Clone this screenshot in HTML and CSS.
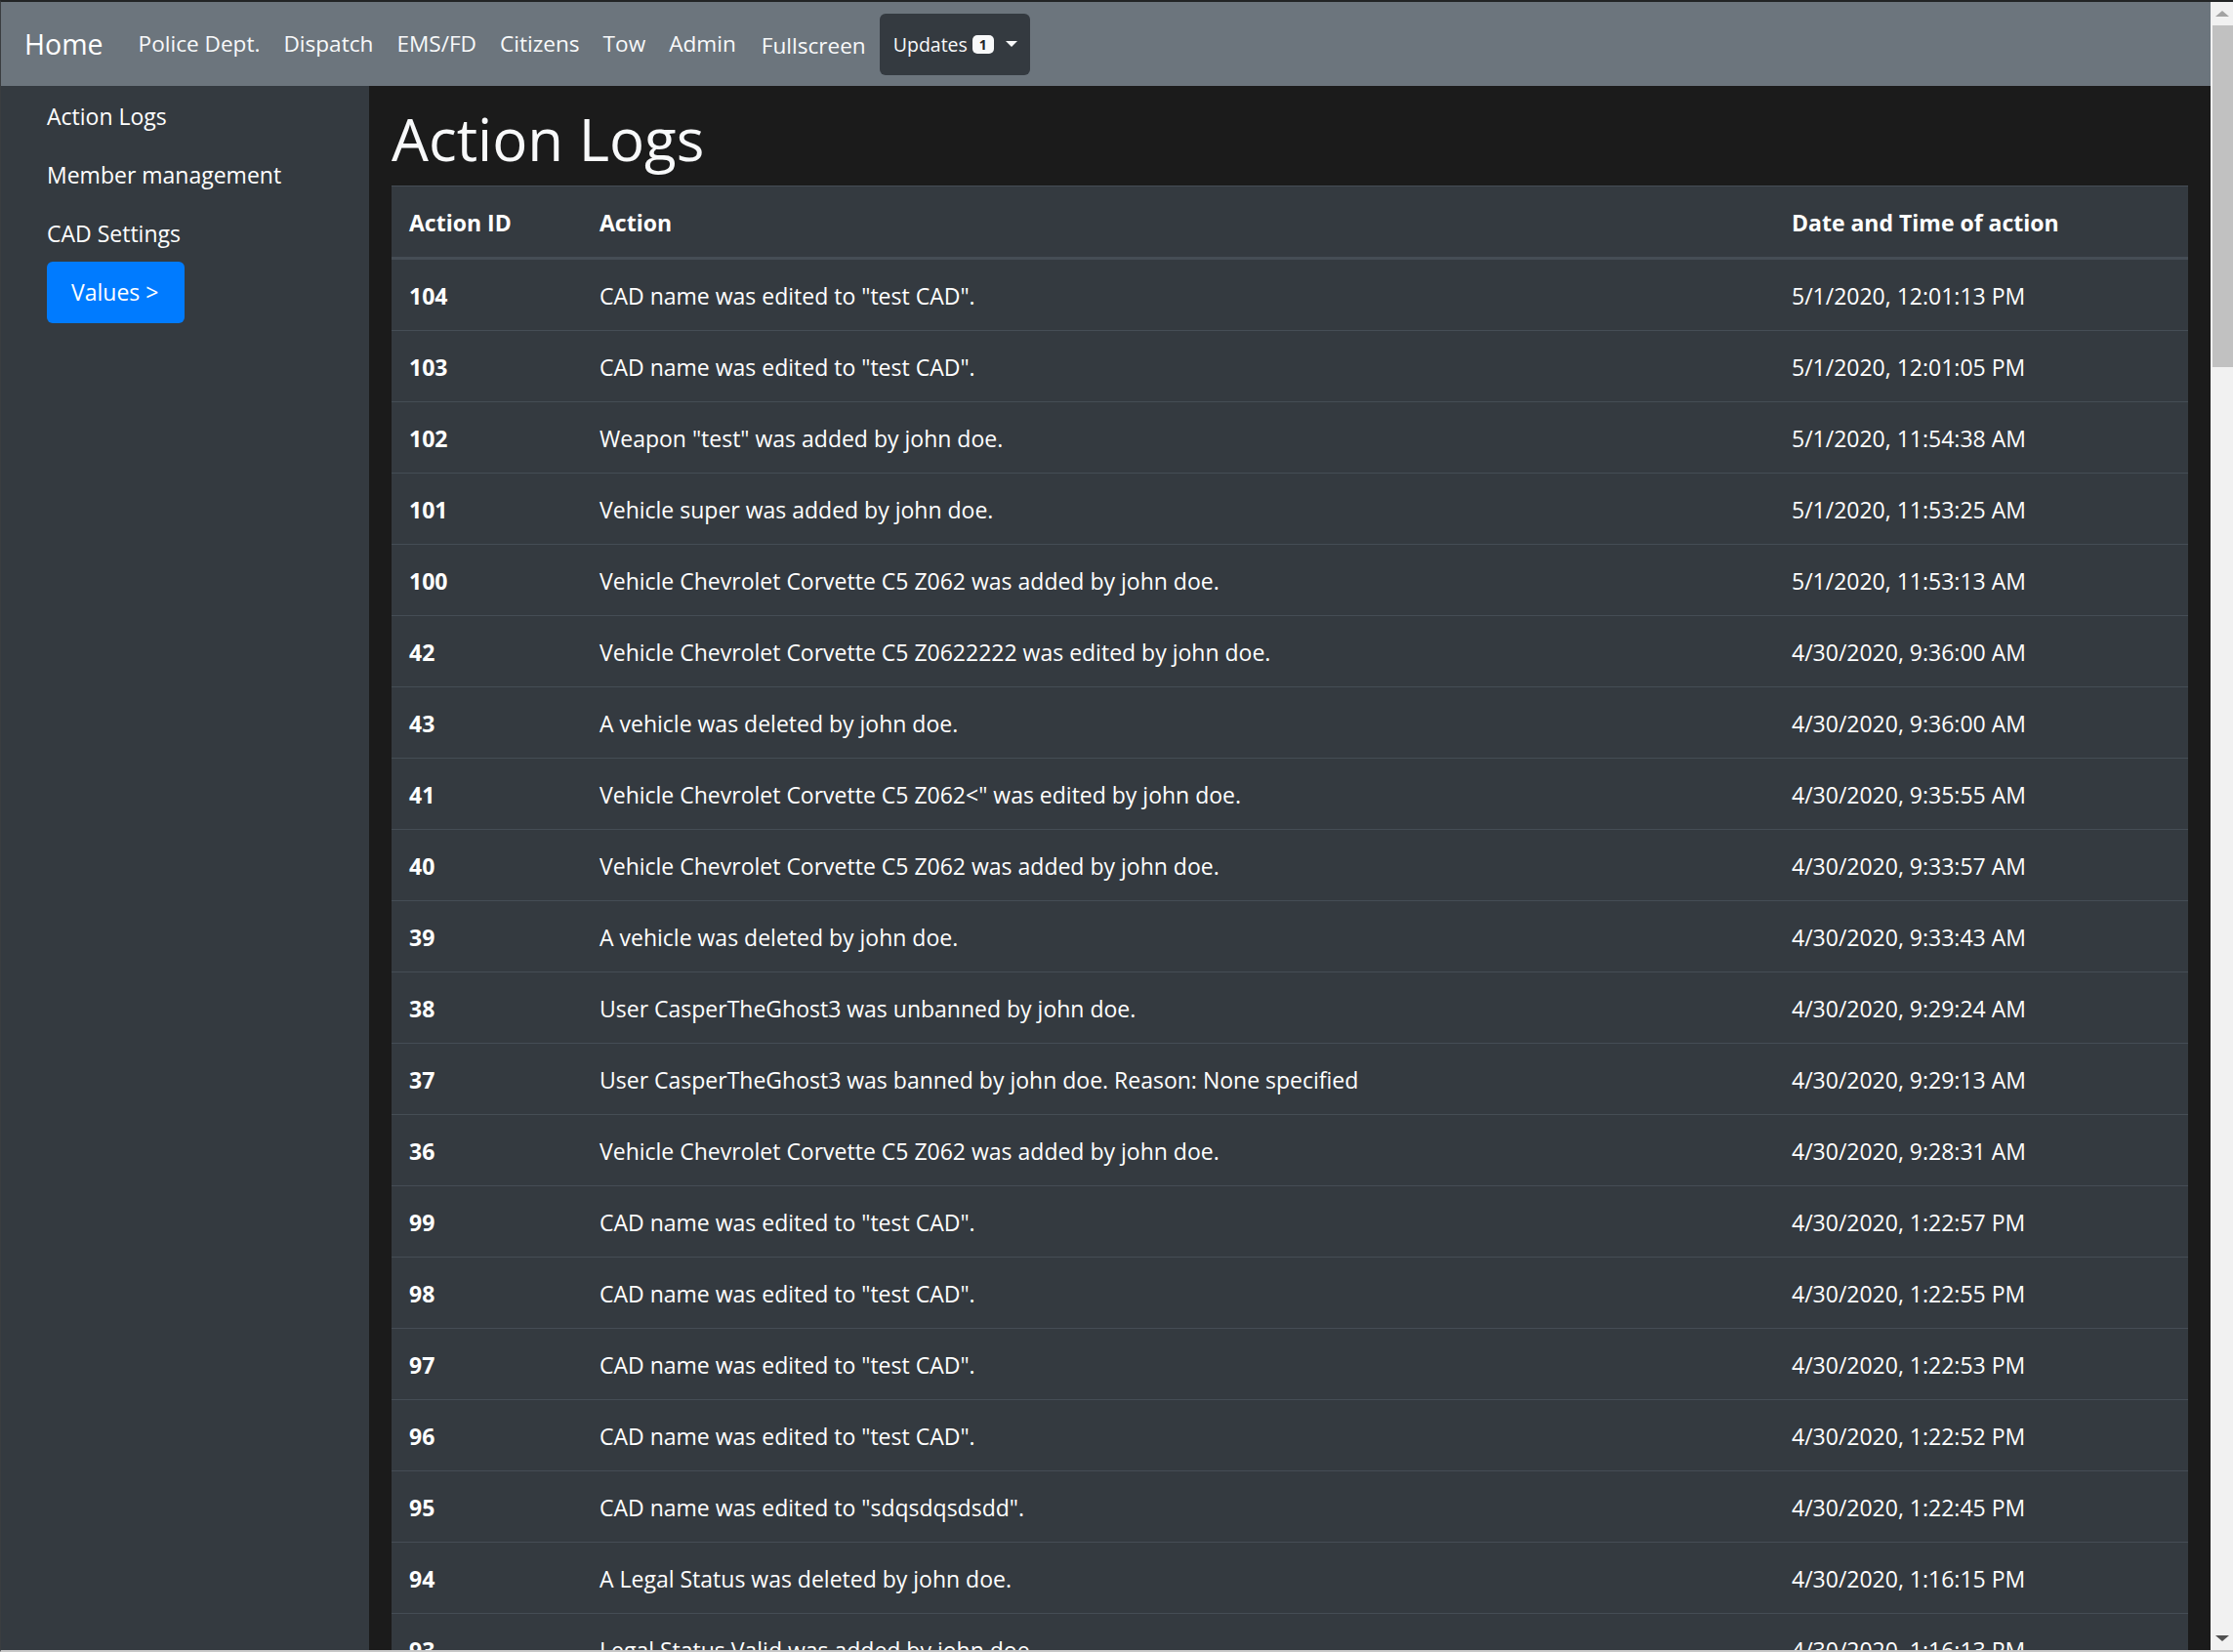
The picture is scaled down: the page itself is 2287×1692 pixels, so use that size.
FILE: index.html
```html
<!DOCTYPE html>
<html lang="en">
<head>
<meta charset="utf-8">
<title>Action Logs</title>
<link rel="stylesheet" href="styles.css">
</head>
<body>
<div class="app">
  <nav class="navbar">
    <a class="brand">Home</a>
    <a class="nav-link">Police Dept.</a>
    <a class="nav-link">Dispatch</a>
    <a class="nav-link">EMS/FD</a>
    <a class="nav-link">Citizens</a>
    <a class="nav-link">Tow</a>
    <a class="nav-link">Admin</a>
    <a class="nav-link nav-full">Fullscreen</a>
    <button class="updates-btn">Updates<span class="badge">1</span><span class="caret"></span></button>
  </nav>
  <div class="content">
    <aside class="sidebar">
      <a class="side-link">Action Logs</a>
      <a class="side-link">Member management</a>
      <a class="side-link">CAD Settings</a>
      <a class="side-btn">Values &gt;</a>
    </aside>
    <main class="main">
      <h1 class="title">Action Logs</h1>
      <table class="logs">
        <thead>
          <tr><th class="col-id">Action ID</th><th>Action</th><th class="col-date">Date and Time of action</th></tr>
        </thead>
        <tbody>
          <tr><td class="id">104</td><td>CAD name was edited to "test CAD".</td><td>5/1/2020, 12:01:13 PM</td></tr>
          <tr><td class="id">103</td><td>CAD name was edited to "test CAD".</td><td>5/1/2020, 12:01:05 PM</td></tr>
          <tr><td class="id">102</td><td>Weapon "test" was added by john doe.</td><td>5/1/2020, 11:54:38 AM</td></tr>
          <tr><td class="id">101</td><td>Vehicle super was added by john doe.</td><td>5/1/2020, 11:53:25 AM</td></tr>
          <tr><td class="id">100</td><td>Vehicle Chevrolet Corvette C5 Z062 was added by john doe.</td><td>5/1/2020, 11:53:13 AM</td></tr>
          <tr><td class="id">42</td><td>Vehicle Chevrolet Corvette C5 Z0622222 was edited by john doe.</td><td>4/30/2020, 9:36:00 AM</td></tr>
          <tr><td class="id">43</td><td>A vehicle was deleted by john doe.</td><td>4/30/2020, 9:36:00 AM</td></tr>
          <tr><td class="id">41</td><td>Vehicle Chevrolet Corvette C5 Z062&lt;" was edited by john doe.</td><td>4/30/2020, 9:35:55 AM</td></tr>
          <tr><td class="id">40</td><td>Vehicle Chevrolet Corvette C5 Z062 was added by john doe.</td><td>4/30/2020, 9:33:57 AM</td></tr>
          <tr><td class="id">39</td><td>A vehicle was deleted by john doe.</td><td>4/30/2020, 9:33:43 AM</td></tr>
          <tr><td class="id">38</td><td>User CasperTheGhost3 was unbanned by john doe.</td><td>4/30/2020, 9:29:24 AM</td></tr>
          <tr><td class="id">37</td><td>User CasperTheGhost3 was banned by john doe. Reason: None specified</td><td>4/30/2020, 9:29:13 AM</td></tr>
          <tr><td class="id">36</td><td>Vehicle Chevrolet Corvette C5 Z062 was added by john doe.</td><td>4/30/2020, 9:28:31 AM</td></tr>
          <tr><td class="id">99</td><td>CAD name was edited to "test CAD".</td><td>4/30/2020, 1:22:57 PM</td></tr>
          <tr><td class="id">98</td><td>CAD name was edited to "test CAD".</td><td>4/30/2020, 1:22:55 PM</td></tr>
          <tr><td class="id">97</td><td>CAD name was edited to "test CAD".</td><td>4/30/2020, 1:22:53 PM</td></tr>
          <tr><td class="id">96</td><td>CAD name was edited to "test CAD".</td><td>4/30/2020, 1:22:52 PM</td></tr>
          <tr><td class="id">95</td><td>CAD name was edited to "sdqsdqsdsdd".</td><td>4/30/2020, 1:22:45 PM</td></tr>
          <tr><td class="id">94</td><td>A Legal Status was deleted by john doe.</td><td>4/30/2020, 1:16:15 PM</td></tr>
          <tr><td class="id">93</td><td>Legal Status Valid was added by john doe.</td><td>4/30/2020, 1:16:13 PM</td></tr>
        </tbody>
      </table>
    </main>
  </div>
</div>
<div class="scrollbar">
  <div class="sb-arrow sb-up"></div>
  <div class="sb-thumb"></div>
  <div class="sb-track"></div>
  <div class="sb-arrow sb-down"></div>
</div>
</body>
</html>
```

FILE: styles.css
```css
* { box-sizing: border-box; }
html, body { margin: 0; padding: 0; }
body {
  width: 2287px;
  height: 1692px;
  overflow: hidden;
  display: flex;
  border-top: 2px solid #222425;
  border-bottom: 2px solid #c8c8c8;
  border-left: 1px solid #3a3d40;
  font-family: "Open Sans", "Noto Sans", sans-serif;
  font-size: 23px;
  line-height: 36px;
  color: #fff;
  background: #1b1b1b;
}
.app {
  flex: 1;
  min-width: 0;
  display: flex;
  flex-direction: column;
}
.navbar {
  height: 86px;
  flex: none;
  background: #6c757d;
  display: flex;
  align-items: center;
  padding: 0 24px;
  font-size: 22.6px;
}
.brand {
  font-size: 28.5px;
  line-height: 40px;
  color: #fff;
  margin-right: 24px;
}
.nav-link {
  color: #f8f9fa;
  padding: 0 12px;
}
.nav-full { padding: 3px 14px 0 14px; }
.updates-btn {
  height: 63px;
  background: #343a40;
  border: none;
  border-radius: 6px;
  color: #f8f9fa;
  font-family: inherit;
  font-size: 19.5px;
  padding: 0 13px 0 14px;
  display: flex;
  align-items: center;
}
.badge {
  display: inline-block;
  margin-left: 5px;
  width: 22px;
  height: 19px;
  line-height: 19px;
  border-radius: 5px;
  background: #f8f9fa;
  color: #212529;
  font-size: 14px;
  font-weight: 700;
  text-align: center;
}
.caret {
  margin-left: 12px;
  width: 0;
  height: 0;
  border-left: 6px solid transparent;
  border-right: 6px solid transparent;
  border-top: 6px solid #f8f9fa;
}
.content {
  flex: 1;
  min-height: 0;
  display: flex;
}
.sidebar {
  width: 377px;
  flex: none;
  background: #343a40;
  display: flex;
  flex-direction: column;
  align-items: flex-start;
  padding-left: 47px;
}
.side-link {
  display: block;
  padding: 13px 0 11px 0;
  color: #fff;
}
.side-btn {
  display: block;
  width: 141px;
  height: 63px;
  line-height: 63px;
  padding-left: 25px;
  background: #007bff;
  color: #fff;
  border-radius: 6px;
}
.main {
  flex: 1;
  min-width: 0;
  background: #1b1b1b;
  padding: 18px 23px 0 23px;
  overflow: hidden;
}
.title {
  margin: 0 0 12px 0;
  font-size: 60px;
  line-height: 72px;
  font-weight: 500;
  color: #f8f9fa;
}
.logs {
  width: 100%;
  border-collapse: separate;
  border-spacing: 0;
  table-layout: fixed;
  background: #343a40;
  color: #fff;
}
.logs th, .logs td {
  padding: 19px 18px 17px 18px;
  line-height: 36px;
  text-align: left;
  vertical-align: top;
  border-top: 1px solid #454d55;
  white-space: nowrap;
}
.logs th {
  font-weight: 700;
  border-bottom: 3px solid #454d55;
}
.logs tbody tr:first-child td { border-top: 0; }
.logs .col-id { width: 195px; }
.logs .col-date { width: 424px; }
.logs td.id { font-weight: 700; }
.scrollbar {
  width: 23px;
  flex: none;
  background: #f1f1f1;
  display: flex;
  flex-direction: column;
}
.sb-arrow {
  height: 24px;
  flex: none;
  display: flex;
  align-items: center;
  justify-content: center;
}
.sb-up::before {
  content: "";
  border-left: 7px solid transparent;
  border-right: 7px solid transparent;
  border-bottom: 6px solid #a3a3a3;
}
.sb-down::before {
  content: "";
  border-left: 7px solid transparent;
  border-right: 7px solid transparent;
  border-top: 6px solid #505050;
}
.sb-thumb {
  height: 350px;
  margin-left: 2px;
  background: #c1c1c1;
  flex: none;
}
.sb-track { flex: 1; }
```
